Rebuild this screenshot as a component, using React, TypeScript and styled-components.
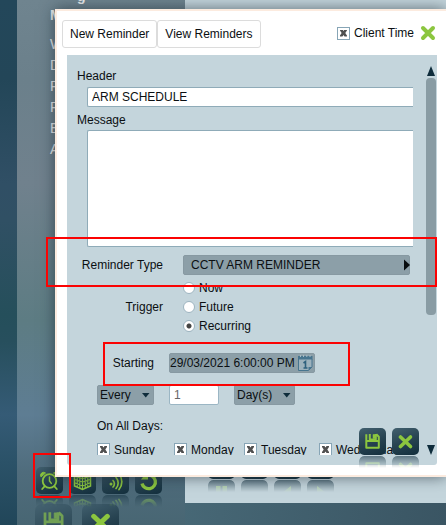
import React, { useState } from "react";
import styled, { createGlobalStyle, css } from "styled-components";

const GlobalStyle = createGlobalStyle`
  *, *::before, *::after { box-sizing: border-box; }
  body {
    margin: 0;
    font-family: "Liberation Sans", Arial, sans-serif;
    font-size: 12px;
    line-height: 16px;
    color: #0b0f12;
  }
  button, input, select, textarea { font: inherit; color: inherit; margin: 0; }
`;

const Desktop = styled.div`
  position: relative;
  display: grid;
  grid-template-columns: 17px 168px 1fr;
  height: 100vh;
  min-height: 480px;
  overflow: hidden;
  background: linear-gradient(100deg, #47697a 0%, #476876 50%, #3a5563 100%);
`;

const Rail = styled.div`
  background: linear-gradient(#23475a 0%, #234658 15%, #304f65 35%, #305064 42%, #254f5b 60%, #274f5d 65%, #355b76 79%, #2b5268 88%, #214659 100%);
`;

const Side = styled.div`
  display: flex;
  flex-direction: column;
  min-height: 0;
  background: linear-gradient(#6f848f 0%, #6b808b 15%, #70818d 35%, #5d7c83 61%, #5e7d93 79%, #4f6c7c 90%, #486673 100%);
`;

const MenuTop = styled.div`
  height: 4px;
  margin-left: 60px;
  font-size: 14px;
  font-weight: bold;
  line-height: 16px;
  color: #eceeef;
  overflow: hidden;
  display: flex;
  align-items: flex-end;
`;

const Menu = styled.nav`
  display: flex;
  flex-direction: column;
  padding: 1px 0 0 33px;
  font-size: 14px;
  line-height: 21px;
  color: #eceeef;
`;

const MenuLink = styled.a<{ $heading?: boolean }>`
  color: inherit;
  text-decoration: none;
  ${(p) => p.$heading && css`font-weight: bold; margin-bottom: 8px;`}
`;

const Toolbar = styled.div`
  display: flex;
  gap: 6px;
  height: 37px;
  margin-top: auto;
  padding-left: 19px;
`;

const LargeToolbar = styled.div`
  display: flex;
  gap: 10px;
  height: 21px;
  padding-left: 18px;
  overflow: hidden;
`;

const Content = styled.div`
  display: flex;
  align-items: flex-end;
  margin-bottom: 22px;
  background: #c4d5dc;
`;

const MediaBar = styled.div`
  display: flex;
  gap: 6px;
  height: 51px;
  padding-left: 23px;
`;

const TileBox = styled.div`
  flex: none;
`;

const TileButton = styled.button<{ $large?: boolean; $dim?: boolean }>`
  display: block;
  width: ${(p) => (p.$large ? 37 : 27)}px;
  height: ${(p) => (p.$large ? 37 : 27)}px;
  padding: 0;
  border: 0;
  border-radius: ${(p) => (p.$large ? 7 : 5)}px;
  background: linear-gradient(160deg, #42606f 0%, #274351 50%, #132f3d 100%);
  color: #8cc63f;
  cursor: pointer;
  opacity: ${(p) => (p.$dim ? 0.6 : 1)};
  svg { display: block; width: 100%; height: 100%; }
`;

const Mirror = styled.div`
  height: 12px;
  margin-top: 1px;
  overflow: hidden;
  border-radius: 5px 5px 0 0;
  color: #8cc63f;
  background: linear-gradient(#1c3a49, #35505d);
  opacity: 0.6;
  mask-image: linear-gradient(#000, transparent);
  svg { display: block; width: 27px; height: 27px; transform: scaleY(-1); }
`;

const Dialog = styled.section`
  position: absolute;
  inset: 9px 0 48px 55px;
  display: flex;
  flex-direction: column;
  border: solid #fcebdf;
  border-width: 2px 0 2px 2px;
  background: #fff;
  box-shadow: 0 0 14px rgba(20, 35, 45, 0.6);
`;

const DialogHeader = styled.header`
  display: flex;
  align-items: flex-start;
  height: 44px;
  padding: 9px 10px 0 5px;
`;

const Tab = styled.button`
  height: 28px;
  padding: 0 7px;
  border: 1px solid #dcdcdc;
  border-radius: 3px;
  background: #fff;
  white-space: nowrap;
  cursor: pointer;
`;

const HeaderTools = styled.div`
  display: flex;
  align-items: center;
  gap: 6px;
  height: 26px;
  margin-left: auto;
`;

const CloseButton = styled.button`
  width: 16px;
  height: 16px;
  padding: 0;
  border: 0;
  background: none;
  color: #8cc63f;
  cursor: pointer;
  svg { display: block; width: 16px; height: 16px; }
`;

const Panel = styled.div`
  position: relative;
  display: grid;
  grid-template-columns: 1fr 10px;
  column-gap: 13px;
  flex: 1;
  min-height: 0;
  margin: 0 9px 10px 10px;
  padding: 0 1px 10px 10px;
  border-radius: 0 0 3px 3px;
  background: #c4d5dc;
`;

const Form = styled.form`
  min-width: 0;
  min-height: 0;
  padding-top: 13px;
  overflow: hidden;
`;

const FieldLabel = styled.label`
  display: block;
`;

const inputFrame = css`
  display: block;
  width: calc(100% - 10px);
  margin-left: 10px;
  padding: 0 4px;
  border: 1px solid #8fabb8;
  border-right: 0;
  border-radius: 2px 0 0 2px;
  background: #fff;
  outline: none;
`;

const TextInput = styled.input`
  ${inputFrame}
  height: 20px;
  margin-top: 3px;
  margin-bottom: 5px;
`;

const MessageBox = styled.textarea`
  ${inputFrame}
  height: 117px;
  margin-top: 2px;
  resize: none;
`;

const Row = styled.div`
  display: grid;
  grid-template-columns: 86px 1fr;
  column-gap: 20px;
  align-items: center;
`;

const TypeRow = styled(Row)`
  margin: 8px 3px 3px 0;
`;

const RightLabel = styled.label`
  text-align: right;
  white-space: nowrap;
`;

const SelectWrap = styled.div`
  position: relative;
`;

const Select = styled.select<{ $inset?: boolean }>`
  display: block;
  width: 100%;
  height: 20px;
  padding: 0 ${(p) => (p.$inset ? 7 : 2)}px;
  border: 1px solid #8799a2;
  border-radius: 2px;
  background: #8c9fa8;
  appearance: none;
  outline: none;
`;

const Arrow = styled.svg<{ $edge: number }>`
  position: absolute;
  top: 0;
  right: ${(p) => p.$edge}px;
  height: 20px;
  pointer-events: none;
`;

const RadioList = styled.div`
  display: flex;
  flex-direction: column;
`;

const Choice = styled.label`
  display: flex;
  align-items: center;
  gap: 4px;
  height: 19px;
  white-space: nowrap;
`;

const Radio = styled.input`
  flex: none;
  width: 12px;
  height: 12px;
  border: 1px solid #9db4c0;
  border-radius: 50%;
  background: #fff;
  appearance: none;
  &:checked { background: radial-gradient(circle, #444 0 2px, #fff 3px); }
`;

const CheckBox = styled.input`
  flex: none;
  display: grid;
  place-items: center;
  width: 13px;
  height: 13px;
  border: 1px solid #87a5b6;
  background: #fff;
  appearance: none;
  &:checked::before {
    content: "";
    width: 7px;
    height: 7px;
    background: #505050;
    clip-path: polygon(0 0, 35% 0, 50% 20%, 65% 0, 100% 0, 100% 15%, 76% 50%, 100% 85%, 100% 100%, 65% 100%, 50% 80%, 35% 100%, 0 100%, 0 85%, 24% 50%, 0 15%);
  }
`;

const Schedule = styled.div`
  display: grid;
  grid-template-columns: 57px 50px 61px;
  gap: 12px 15px;
  align-items: center;
  margin: 18px 0 13px 20px;
`;

const DateField = styled.div`
  display: flex;
  align-items: center;
  grid-column: 2 / span 2;
  width: 146px;
  height: 20px;
  border: 1px solid #8799a2;
  border-radius: 2px;
  background: #8c9fa8;
`;

const DateInput = styled.input`
  flex: 1;
  min-width: 0;
  padding: 0;
  border: 0;
  background: none;
  outline: none;
`;

const CalendarButton = styled.button`
  width: 17px;
  height: 18px;
  padding: 0;
  border: 0;
  background: none;
  cursor: pointer;
  svg { display: block; }
`;

const CountInput = styled.input`
  width: 100%;
  height: 20px;
  padding: 0 4px;
  border: 1px solid #9bb6c4;
  border-radius: 2px;
  background: #fff;
  color: #666;
  outline: none;
`;

const Days = styled.fieldset`
  margin: 0 0 0 20px;
  padding: 0;
  border: 0;
  legend { padding: 0; margin-bottom: 6px; }
`;

const DayList = styled.div`
  display: grid;
  grid-template-columns: 77px 70px 75px 80px;
`;

const ScrollRail = styled.div`
  display: flex;
  flex-direction: column;
  align-items: center;
  padding-top: 11px;
  svg { display: block; }
`;

const Thumb = styled.div`
  width: 10px;
  height: 61%;
  margin-top: 2px;
  margin-bottom: auto;
  border-radius: 4px;
  background: #899ca4;
`;

const Actions = styled.div`
  position: absolute;
  right: 18px;
  bottom: -3px;
  display: flex;
  gap: 6px;
`;

const Highlight = styled.div`
  position: absolute;
  border: 2px solid #fb0303;
  pointer-events: none;
`;

const TypeHighlight = styled(Highlight)`
  top: 237px;
  left: 46px;
  right: 9px;
  height: 50px;
`;

const StartHighlight = styled(Highlight)`
  top: 342px;
  left: 103px;
  width: 247px;
  height: 44px;
`;

const AlarmHighlight = styled(Highlight)`
  left: 33px;
  bottom: 27px;
  width: 38px;
  height: 45px;
`;

type IconName = "alarm" | "map" | "signal" | "undo" | "save" | "close" | "pause" | "prev" | "next" | "stop";

const drawings: Record<IconName, React.ReactNode> = {
  alarm: (
    <g fill="none" stroke="currentColor" strokeWidth="1.8" strokeLinecap="round">
      <circle cx="13.500" cy="14" r="6.800" />
      <path d="M13.500 10v4l1.800 2.400" strokeWidth="1.500" />
      <path d="M8.800 19.200 6.200 22M18.200 19.200l2.600 2.800" />
      <path d="M4.800 9.500a3 3 0 0 1 4.400-3.700zM22.200 9.500a3 3 0 0 0-4.400-3.700z" fill="currentColor" strokeWidth="1" />
    </g>
  ),
  map: (
    <g fill="none" stroke="currentColor" strokeWidth="1.1">
      <path d="M5.500 6v13l8 3.500 8-3.500V6l-8 2.500z" strokeWidth="1.500" />
      <path d="M5.500 9.500l8 2 8-2M5.500 12.500l8 2.500 8-2.500M5.500 15.800l8 3 8-3M8.200 7v13M10.800 8v13M13.500 8.500v14M16.200 8v13M18.800 7v13" />
    </g>
  ),
  signal: (
    <g fill="none" stroke="currentColor" strokeWidth="1.700" strokeLinecap="round">
      <circle cx="9" cy="17" r="1.500" fill="currentColor" stroke="none" />
      <path d="M11 13.500a4.500 4.500 0 0 1 0 6.500M14 10.500a8 8 0 0 1 0 11M17 7a12 12 0 0 1 0 15.500" />
    </g>
  ),
  undo: (
    <g>
      <path d="M12.500 8.200a6.800 6.800 0 1 1-5.500 8.300" fill="none" stroke="currentColor" strokeWidth="3.300" />
      <path d="M6 12.500h7V3.500z" fill="currentColor" />
    </g>
  ),
  save: (
    <g fill="none" stroke="currentColor" strokeWidth="2" strokeLinejoin="round">
      <path d="M7.300 6.200v13.500h12.500V8.700l-2.500-2.500M6.700 13h13M10.800 6v5.500h6V6" />
      <path d="M14 6.500h2v4h-2z" fill="currentColor" strokeWidth=".5" />
    </g>
  ),
  close: <path d="M8.500 9 18.500 18.500M18.500 9 8.500 18.500" fill="none" stroke="currentColor" strokeWidth="3.600" strokeLinecap="round" />,
  pause: <path d="M8 8h4.500v13H8zM14.500 8H19v13h-4.500z" fill="currentColor" />,
  prev: <path d="M17 7v14l-9-7z" fill="currentColor" />,
  next: <path d="M10 7v14l9-7z" fill="currentColor" />,
  stop: null,
};

function Icon({ name }: { name: IconName }) {
  return <svg viewBox="0 0 27 27" aria-hidden="true">{drawings[name]}</svg>;
}

function Tile({ icon, label, onClick }: { icon: IconName; label: string; onClick?: () => void }) {
  return (
    <TileBox>
      <TileButton type="button" aria-label={label} onClick={onClick}><Icon name={icon} /></TileButton>
      <Mirror><Icon name={icon} /></Mirror>
    </TileBox>
  );
}

const menuItems = ["W", "D", "P", "P", "E", "A"];
const triggers = ["Now", "Future", "Recurring"];
const days = ["Sunday", "Monday", "Tuesday", "Wednesday"];

function DownArrow() {
  return <Arrow $edge={4} width="9" viewBox="0 0 9 20"><path d="M1 8h7.500l-3.750 4.500z" fill="#0e2c3b" /></Arrow>;
}

export default function App() {
  const [trigger, setTrigger] = useState("Recurring");
  return (
    <>
      <GlobalStyle />
      <Desktop>
        <Rail />
        <Side>
          <MenuTop>g</MenuTop>
          <Menu>
            <MenuLink href="#" $heading>M</MenuLink>
            {menuItems.map((item, i) => <MenuLink href="#" key={i}>{item}</MenuLink>)}
          </Menu>
          <Toolbar>
            <Tile icon="alarm" label="Reminders" />
            <Tile icon="map" label="Map" />
            <Tile icon="signal" label="Signal" />
            <Tile icon="undo" label="Undo" />
          </Toolbar>
          <LargeToolbar>
            <TileButton type="button" $large $dim aria-label="Save all"><Icon name="save" /></TileButton>
            <TileButton type="button" $large aria-label="Close all"><Icon name="close" /></TileButton>
          </LargeToolbar>
        </Side>
        <Content>
          <MediaBar>
            <Tile icon="pause" label="Pause" />
            <Tile icon="stop" label="Stop" />
            <Tile icon="prev" label="Previous" />
            <Tile icon="next" label="Next" />
          </MediaBar>
        </Content>

        <Dialog role="dialog" aria-label="New Reminder">
          <DialogHeader>
            <Tab type="button">New Reminder</Tab>
            <Tab type="button">View Reminders</Tab>
            <HeaderTools>
              <Choice><CheckBox type="checkbox" defaultChecked />Client Time</Choice>
              <CloseButton type="button" aria-label="Close">
                <svg viewBox="0 0 16 16"><path d="M3 3l10 10M13 3 3 13" stroke="currentColor" strokeWidth="4" strokeLinecap="round" /></svg>
              </CloseButton>
            </HeaderTools>
          </DialogHeader>

          <Panel>
            <Form onSubmit={(e) => e.preventDefault()}>
              <FieldLabel htmlFor="header">Header</FieldLabel>
              <TextInput id="header" defaultValue="ARM SCHEDULE" />
              <FieldLabel htmlFor="message">Message</FieldLabel>
              <MessageBox id="message" />

              <TypeRow>
                <RightLabel htmlFor="type">Reminder Type</RightLabel>
                <SelectWrap>
                  <Select id="type" $inset><option>CCTV ARM REMINDER</option></Select>
                  <Arrow $edge={0} width="6" viewBox="0 0 6 20"><path d="M0 4.500v11l6-5.500z" fill="#080c0e" /></Arrow>
                </SelectWrap>
              </TypeRow>

              <Row role="radiogroup" aria-labelledby="trigger">
                <RightLabel as="span" id="trigger">Trigger</RightLabel>
                <RadioList>
                  {triggers.map((t) => (
                    <Choice key={t}>
                      <Radio type="radio" name="trigger" checked={trigger === t} onChange={() => setTrigger(t)} />
                      {t}
                    </Choice>
                  ))}
                </RadioList>
              </Row>

              <Schedule>
                <RightLabel htmlFor="start">Starting</RightLabel>
                <DateField>
                  <DateInput id="start" defaultValue="29/03/2021 6:00:00 PM" />
                  <CalendarButton type="button" aria-label="Choose date">
                    <svg width="17" height="18" viewBox="0 0 17 18">
                      <path d="M1.500 5v11.500h10l3.500-3.500V5" fill="#9db2bd" stroke="#47758f" />
                      <path d="M1 2h14.500v3.500H1z" fill="#47758f" />
                      <path d="M3.500 1v2M6.500 1v2M9.800 1v2M13 1v2" stroke="#a9bdc7" />
                      <path d="M11.500 16.500V13H15z" fill="#47758f" />
                      <path d="M6.500 9l2-1.500V14M6.500 14h4" fill="none" stroke="#2f617e" strokeWidth="1.600" />
                    </svg>
                  </CalendarButton>
                </DateField>
                <SelectWrap>
                  <Select aria-label="Frequency"><option>Every</option></Select>
                  <DownArrow />
                </SelectWrap>
                <CountInput aria-label="Interval" defaultValue="1" />
                <SelectWrap>
                  <Select aria-label="Unit"><option>Day(s)</option></Select>
                  <DownArrow />
                </SelectWrap>
              </Schedule>

              <Days>
                <legend>On All Days:</legend>
                <DayList>
                  {days.map((d) => <Choice key={d}><CheckBox type="checkbox" defaultChecked />{d}</Choice>)}
                </DayList>
              </Days>
            </Form>

            <ScrollRail>
              <svg width="8" height="10" viewBox="0 0 8 10"><path d="M4 0l4 10H0z" fill="#0e2c3b" /></svg>
              <Thumb />
              <svg width="8" height="10" viewBox="0 0 8 10"><path d="M0 0h8L4 10z" fill="#0e2c3b" /></svg>
            </ScrollRail>

            <Actions>
              <Tile icon="save" label="Save" />
              <Tile icon="close" label="Cancel" />
            </Actions>
          </Panel>
        </Dialog>

        <TypeHighlight />
        <StartHighlight />
        <AlarmHighlight />
      </Desktop>
    </>
  );
}
